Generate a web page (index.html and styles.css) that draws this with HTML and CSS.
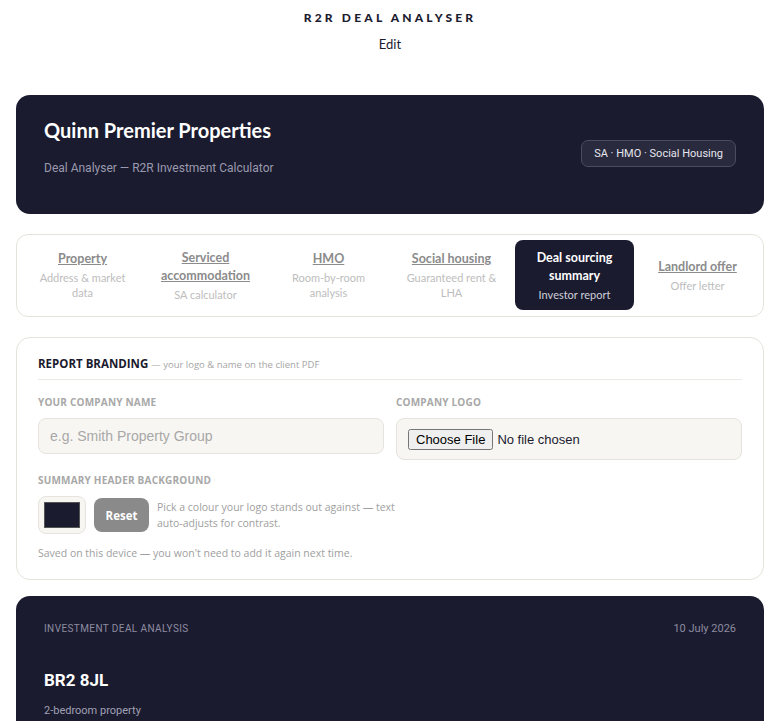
FILE: index.html
```html
<!DOCTYPE html>
<html lang="en">
<head>
    <meta charset="UTF-8">
    <meta name="viewport" content="width=device-width, initial-scale=1.0">
    <title>R2R Deal Analyser</title>
    <link rel="stylesheet" href="styles.css">
</head>
<body>

    <!-- Page title -->
    <header class="page-head">
        <h1>R2R DEAL ANALYSER</h1>
        <a class="edit-link" href="#">Edit</a>
    </header>

    <main class="page">
        <!-- Company banner -->
        <section class="banner">
            <div>
                <h2>Quinn Premier Properties</h2>
                <p>Deal Analyser — R2R Investment Calculator</p>
            </div>
            <span class="banner-badge">SA · HMO · Social Housing</span>
        </section>

        <!-- Calculator tabs -->
        <nav class="tabs">
            <a class="tab" href="#"><strong>Property</strong><span>Address &amp; market data</span></a>
            <a class="tab" href="#"><strong>Serviced accommodation</strong><span>SA calculator</span></a>
            <a class="tab" href="#"><strong>HMO</strong><span>Room-by-room analysis</span></a>
            <a class="tab" href="#"><strong>Social housing</strong><span>Guaranteed rent &amp; LHA</span></a>
            <a class="tab active" href="#"><strong>Deal sourcing summary</strong><span>Investor report</span></a>
            <a class="tab" href="#"><strong>Landlord offer</strong><span>Offer letter</span></a>
        </nav>

        <!-- Report branding -->
        <section class="card branding">
            <h3 class="card-title">REPORT BRANDING <small>— your logo &amp; name on the client PDF</small></h3>

            <div class="field-row">
                <div class="field">
                    <label for="companyName">YOUR COMPANY NAME</label>
                    <input type="text" id="companyName" class="text-input" placeholder="e.g. Smith Property Group">
                </div>
                <div class="field">
                    <label for="companyLogo">COMPANY LOGO</label>
                    <div class="file-box">
                        <input type="file" id="companyLogo">
                    </div>
                </div>
            </div>

            <div class="field">
                <label>SUMMARY HEADER BACKGROUND</label>
                <div class="colour-row">
                    <div class="swatch-box"><span class="swatch"></span></div>
                    <button class="reset-btn">Reset</button>
                    <p class="hint">Pick a colour your logo stands out against — text auto-adjusts for contrast.</p>
                </div>
            </div>

            <p class="saved-note">Saved on this device — you won't need to add it again next time.</p>
        </section>

        <!-- Summary report -->
        <section class="summary">
            <div class="summary-top">
                <span class="summary-kicker">INVESTMENT DEAL ANALYSIS</span>
                <span class="summary-date">10 July 2026</span>
            </div>
            <h2>BR2 8JL</h2>
            <p>2-bedroom property</p>
        </section>
    </main>

</body>
</html>
```

FILE: styles.css
```css
* {
    box-sizing: border-box;
    margin: 0;
    padding: 0;
}

body {
    font-family: "Lato", "Open Sans", sans-serif;
    background-color: #ffffff;
    color: #1b1b2f;
    min-width: 780px;
}

.page-head {
    text-align: center;
    padding-top: 10px;
}

.page-head h1 {
    font-size: 12px;
    font-weight: 900;
    letter-spacing: 3.2px;
    color: #1b1b2f;
    line-height: 16px;
}

.edit-link {
    display: inline-block;
    margin-top: 10px;
    font-size: 13px;
    color: #1b1b2f;
    text-decoration: none;
}

.page {
    padding: 43px 16px 0;
    display: flex;
    flex-direction: column;
    gap: 20px;
}

/* Company banner */
.banner {
    background-color: #1b1b2f;
    color: #ffffff;
    border-radius: 14px;
    height: 119px;
    padding: 22px 28px;
    display: flex;
    justify-content: space-between;
    align-items: flex-start;
}

.banner h2 {
    font-size: 20px;
    font-weight: 700;
    line-height: 26px;
}

.banner p {
    margin-top: 18px;
    font-family: "Roboto", sans-serif;
    font-size: 12px;
    color: #9a9aae;
}

.banner-badge {
    margin-top: 23px;
    font-family: "Roboto", sans-serif;
    font-size: 11px;
    padding: 6px 12px;
    border: 1px solid #4c4c60;
    background-color: #2a2a3e;
    border-radius: 7px;
    color: #e6e6ee;
}

/* Tabs */
.tabs {
    display: grid;
    grid-template-columns: repeat(6, 1fr);
    gap: 4px;
    padding: 5px 6px 6px;
    border: 1px solid #e6e3dc;
    border-radius: 12px;
}

.tab {
    display: flex;
    flex-direction: column;
    align-items: center;
    justify-content: center;
    text-align: center;
    padding: 6px 8px;
    min-height: 70px;
    border-radius: 8px;
    text-decoration: none;
}

.tab strong {
    font-size: 12.5px;
    font-weight: 700;
    color: #8b8b8b;
    text-decoration: underline;
    line-height: 18px;
}

.tab span {
    font-size: 11px;
    color: #bdbdbd;
    line-height: 15px;
    margin-top: 2px;
}

.tab.active {
    background-color: #1b1b2f;
}

.tab.active strong {
    color: #ffffff;
    text-decoration: none;
}

.tab.active span {
    color: #cfcfd8;
}

/* Branding card */
.card {
    border: 1px solid #e6e3dc;
    border-radius: 14px;
    padding: 18px 21px 19px;
}

.card-title {
    font-family: "Open Sans", sans-serif;
    font-size: 11.5px;
    font-weight: 700;
    color: #1b1b2f;
    padding-bottom: 8px;
    border-bottom: 1px solid #ebe9e4;
}

.card-title small {
    font-size: 9.5px;
    font-weight: 400;
    color: #a5a5a5;
}

.field-row {
    display: grid;
    grid-template-columns: 1fr 1fr;
    gap: 12px;
    margin-top: 15px;
}

.field label {
    display: block;
    font-family: "Open Sans", sans-serif;
    font-size: 10px;
    font-weight: 700;
    color: #a8a8a8;
    letter-spacing: 0.2px;
    margin-bottom: 9px;
}

.text-input {
    width: 100%;
    height: 36px;
    padding: 0 11px;
    font-family: "Liberation Sans", sans-serif;
    font-size: 14px;
    background-color: #f7f6f2;
    border: 1px solid #e6e3dc;
    border-radius: 8px;
    color: #1b1b2f;
}

.text-input::placeholder {
    color: #a8a8a8;
}

.file-box {
    height: 42px;
    padding: 0 11px;
    display: flex;
    align-items: center;
    background-color: #f7f6f2;
    border: 1px solid #e6e3dc;
    border-radius: 8px;
}

.file-box input {
    font-family: "Liberation Sans", sans-serif;
    font-size: 13px;
    color: #1b1b2f;
}

.branding > .field {
    margin-top: 13px;
}

.colour-row {
    display: flex;
    align-items: center;
    gap: 8px;
    margin-top: 1px;
}

.swatch-box {
    width: 48px;
    height: 38px;
    padding: 5px;
    background-color: #f7f6f2;
    border: 1px solid #e6e3dc;
    border-radius: 8px;
    display: flex;
}

.swatch {
    flex: 1;
    background-color: #1b1b2f;
    border: 1px solid #555;
}

.reset-btn {
    width: 55px;
    height: 34px;
    background-color: #8a8a8a;
    color: #ffffff;
    font-family: "Open Sans", sans-serif;
    font-size: 11.5px;
    font-weight: 700;
    border: none;
    border-radius: 8px;
}

.hint {
    width: 250px;
    font-family: "Open Sans", sans-serif;
    font-size: 10.5px;
    line-height: 16px;
    color: #a0a0a0;
}

.saved-note {
    margin-top: 12px;
    font-family: "Open Sans", sans-serif;
    font-size: 10.5px;
    color: #a0a0a0;
}

/* Summary report */
.summary {
    margin-top: -4px;
    background-color: #1b1b2f;
    color: #ffffff;
    border-radius: 14px 14px 0 0;
    padding: 26px 28px 20px;
    min-height: 140px;
}

.summary-top {
    display: flex;
    justify-content: space-between;
    align-items: center;
}

.summary-kicker {
    font-family: "Roboto", sans-serif;
    font-size: 10px;
    letter-spacing: 0.4px;
    color: #8c8ca0;
}

.summary-date {
    font-family: "Roboto", sans-serif;
    font-size: 11px;
    color: #8c8ca0;
}

.summary h2 {
    margin-top: 35px;
    font-family: "Roboto", sans-serif;
    font-size: 17px;
    font-weight: 700;
}

.summary p {
    margin-top: 14px;
    font-family: "Roboto", sans-serif;
    font-size: 11px;
    color: #a0a0b4;
}
```
